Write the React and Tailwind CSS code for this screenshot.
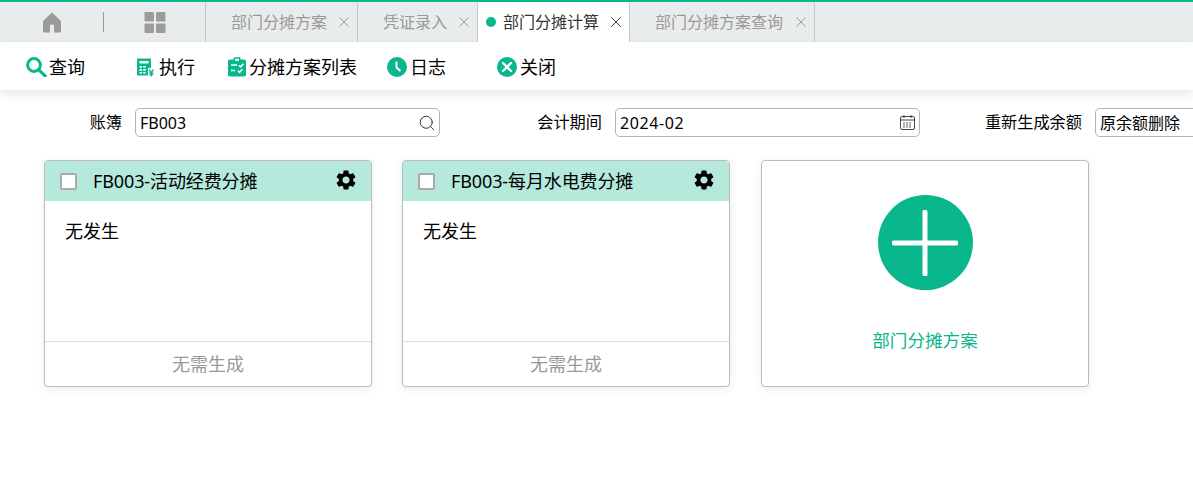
import { Search, X } from 'lucide-react'
import { MdSettings } from 'react-icons/md'

const FONT = "font-['Noto_Sans','Noto_Sans_CJK_SC',sans-serif]"
const GREEN = '#0ab68b'

const TABS = [
  { label: '部门分摊方案', width: 'w-[152px]', pad: 'pl-[25px]' },
  { label: '凭证录入', width: 'w-[120px]', pad: 'pl-[25px]' },
  { label: '部门分摊计算', width: 'w-[152px]', pad: 'pl-[8px]', active: true },
  { label: '部门分摊方案查询', width: 'w-[185px]', pad: 'pl-[25px]' },
]

function HomeIcon() {
  return (
    <svg width="20" height="21" viewBox="0 0 20 21" fill="#9b9b9b">
      <path d="M10 0.5 L19 9 V19 C19 20 18.5 20.5 17.5 20.5 H12 V14 C12 13 11 12.5 10 12.5 C9 12.5 8 13 8 14 V20.5 H2.5 C1.5 20.5 1 20 1 19 V9 Z" />
    </svg>
  )
}

function GridIcon() {
  return (
    <svg width="22" height="21" viewBox="0 0 22 21" fill="#9b9b9b">
      <rect x="0.5" y="0" width="9.5" height="9.5" rx="1.2" />
      <rect x="12" y="0" width="9.5" height="9.5" rx="1.2" />
      <rect x="0.5" y="11.5" width="9.5" height="9.5" rx="1.2" />
      <rect x="12" y="11.5" width="9.5" height="9.5" rx="1.2" />
    </svg>
  )
}

function ToolSearchIcon() {
  return (
    <svg width="21" height="20" viewBox="0 0 21 20" fill="none" stroke={GREEN}>
      <circle cx="8" cy="8" r="6.4" strokeWidth="3" />
      <path d="M12.8 12.8 L19.2 19" strokeWidth="3.2" strokeLinecap="round" />
    </svg>
  )
}

function CalcIcon() {
  return (
    <svg width="18" height="19" viewBox="0 0 18 19">
      <path d="M1 0.5 H13 C13.6 0.5 14 0.9 14 1.5 V10 H11 V17.5 H1 C0.4 17.5 0 17.1 0 16.5 V1.5 C0 0.9 0.4 0.5 1 0.5 Z" fill={GREEN} />
      <rect x="2.5" y="3" width="9" height="2.5" fill="#fff" />
      <path d="M2.5 8 H5 V9.8 H2.5 Z M6.2 8 H8.7 V9.8 H6.2 Z M2.5 11 H5 V12.8 H2.5 Z M6.2 11 H8.7 V12.8 H6.2 Z M2.5 14 H5 V15.6 H2.5 Z M6.2 14 H8.7 V15.6 H6.2 Z" fill="#fff" />
      <path d="M12 11.5 L14.3 14.5 L16.6 11.5 M14.3 14.5 V18.5 M12.4 15 H16.2 M12.4 16.6 H16.2" stroke={GREEN} strokeWidth="1.3" fill="none" />
    </svg>
  )
}

function ClipboardIcon() {
  return (
    <svg width="18" height="20" viewBox="0 0 18 20">
      <path d="M2 2.5 H5.5 V1.5 C5.5 0.7 6 0.3 6.8 0.3 H11.2 C12 0.3 12.5 0.7 12.5 1.5 V2.5 H16 C17.2 2.5 18 3.3 18 4.5 V17.5 C18 18.7 17.2 19.5 16 19.5 H2 C0.8 19.5 0 18.7 0 17.5 V4.5 C0 3.3 0.8 2.5 2 2.5 Z" fill={GREEN} />
      <rect x="7" y="1.8" width="4" height="2" fill="#fff" />
      <path d="M3 8 H9 M3 13.5 H7" stroke="#fff" strokeWidth="1.6" />
      <path d="M11 8.2 L12.6 9.8 L15.4 6.8 M10 13.7 L11.6 15.3 L14.4 12.3" stroke="#fff" strokeWidth="1.6" fill="none" />
    </svg>
  )
}

function ClockIcon() {
  return (
    <svg width="20" height="20" viewBox="0 0 20 20">
      <circle cx="10" cy="10" r="10" fill={GREEN} />
      <path d="M9.5 4.5 V10.5 L13.5 14" stroke="#fff" strokeWidth="2" fill="none" />
    </svg>
  )
}

function CloseIcon() {
  return (
    <svg width="20" height="20" viewBox="0 0 20 20">
      <circle cx="10" cy="10" r="10" fill={GREEN} />
      <path d="M6 6 L14 14 M14 6 L6 14" stroke="#fff" strokeWidth="2.4" strokeLinecap="round" />
    </svg>
  )
}

function CalendarIcon() {
  return (
    <svg width="15" height="15" viewBox="0 0 15 15" fill="none" stroke="#333" strokeWidth="0.9">
      <rect x="0.5" y="1.5" width="14" height="13" rx="1.5" />
      <path d="M0.5 5 H14.5 M4 0 V3 M11 0 V3" />
      <path d="M3 8 H12 M3 10 H12 M3 12 H12" strokeDasharray="2 1" strokeWidth="0.8" />
    </svg>
  )
}

function Tab({ tab }) {
  return (
    <div
      className={`${tab.width} ${tab.pad} h-[40px] flex items-center border-r border-[#c4c8c8] text-[16px] rounded-t-[3px] ${
        tab.active ? 'bg-white text-[#333]' : 'text-[#999]'
      }`}
    >
      {tab.active && <span className="w-[10px] h-[10px] rounded-full bg-[#0ab68b] mr-[7px]" />}
      <span>{tab.label}</span>
      <X className={`w-[18px] h-[18px] ml-auto mr-[4px] ${tab.active ? 'text-[#333]' : 'text-[#999]'}`} strokeWidth={1.3} />
    </div>
  )
}

function ToolItem({ icon, label, width, gap }) {
  return (
    <div className={`${width} flex items-center`}>
      {icon}
      <span className={`${gap} text-[18px] text-black`}>{label}</span>
    </div>
  )
}

function Field({ label, value, icon, valueClass = '' }) {
  return (
    <div className="w-[480px] shrink-0 flex items-center">
      <span className="w-[122px] text-right text-[16.2px] text-black whitespace-nowrap">{label}</span>
      <div className="ml-[13px] w-[305px] h-[29px] shrink-0 flex items-center justify-between border border-[#b4b4b4] rounded-[5px] pl-[4px] pr-[4px] text-[16px] text-black">
        <span className={valueClass}>{value}</span>
        {icon}
      </div>
    </div>
  )
}

function PlanCard({ title }) {
  return (
    <div className="w-[328px] h-[227px] flex flex-col border border-[#bbbbbb] rounded-[4px] shadow-[0_2px_8px_rgba(0,0,0,0.08)] overflow-hidden bg-white">
      <div className="h-[40px] bg-[#b5e9dc] flex items-center pl-[15px] pr-[13px]">
        <span className="w-[17px] h-[17px] bg-white border-2 border-[#aaaaaa] rounded-[2px]" />
        <span className="ml-[16px] text-[18px] tracking-[-0.12px] text-black">{title}</span>
        <MdSettings className="ml-auto w-[24px] h-[24px] text-black -mt-[2px]" />
      </div>
      <div className="flex-1 pl-[20px] pt-[17px] text-[18px] text-black">无发生</div>
      <div className="h-[45px] border-t border-[#dddddd] flex items-center justify-center text-[18px] text-[#999]">无需生成</div>
    </div>
  )
}

export default function App() {
  return (
    <div className={`${FONT} w-[1193px] h-[498px] overflow-hidden bg-white`}>
      <div className="h-[42px] bg-[#e9ecec] border-t-2 border-[#0ab68b] flex items-end">
        <div className="w-[206px] h-[40px] flex items-center border-r border-[#c4c8c8]">
          <div className="ml-[42px] flex"><HomeIcon /></div>
          <div className="ml-[41px] w-px h-[20px] bg-[#9b9b9b]" />
          <div className="ml-[40px] flex"><GridIcon /></div>
        </div>
        {TABS.map(tab => <Tab key={tab.label} tab={tab} />)}
      </div>

      <div className="h-[48px] flex items-center pl-[26px] pt-[2px] bg-white shadow-[0_4px_10px_rgba(0,0,0,0.1)]">
        <ToolItem width="w-[111px]" gap="ml-[2px]" label="查询" icon={<ToolSearchIcon />} />
        <ToolItem width="w-[91px]" gap="ml-[4px]" label="执行" icon={<CalcIcon />} />
        <ToolItem width="w-[159px]" gap="ml-[3px]" label="分摊方案列表" icon={<ClipboardIcon />} />
        <ToolItem width="w-[110px]" gap="ml-[3px]" label="日志" icon={<ClockIcon />} />
        <ToolItem width="w-[80px]" gap="ml-[3px]" label="关闭" icon={<CloseIcon />} />
      </div>

      <div className="mt-[18px] flex">
        <Field label="账簿" value="FB003" icon={<Search className="w-[18px] h-[18px] -mr-px text-[#333]" strokeWidth={1.3} />} />
        <Field label="会计期间" value="2024-02" valueClass="tracking-[0.6px]" icon={<CalendarIcon />} />
        <Field label="重新生成余额" value="原余额删除" />
      </div>

      <div className="mt-[23px] ml-[44px] flex gap-[30px]">
        <PlanCard title="FB003-活动经费分摊" />
        <PlanCard title="FB003-每月水电费分摊" />
        <div className="ml-px w-[328px] h-[227px] flex flex-col items-center border border-[#bbbbbb] rounded-[4px] shadow-[0_2px_8px_rgba(0,0,0,0.08)] bg-white">
          <div className="mt-[34px] w-[95px] h-[95px] rounded-full bg-[#0ab68b] flex items-center justify-center">
            <svg width="66" height="66" viewBox="0 0 66 66">
              <path d="M33 2 V64 M2 33 H64" stroke="#fff" strokeWidth="5" strokeLinecap="round" />
            </svg>
          </div>
          <div className="mt-[37px] text-[17.6px] text-[#0ab68b]">部门分摊方案</div>
        </div>
      </div>
    </div>
  )
}
